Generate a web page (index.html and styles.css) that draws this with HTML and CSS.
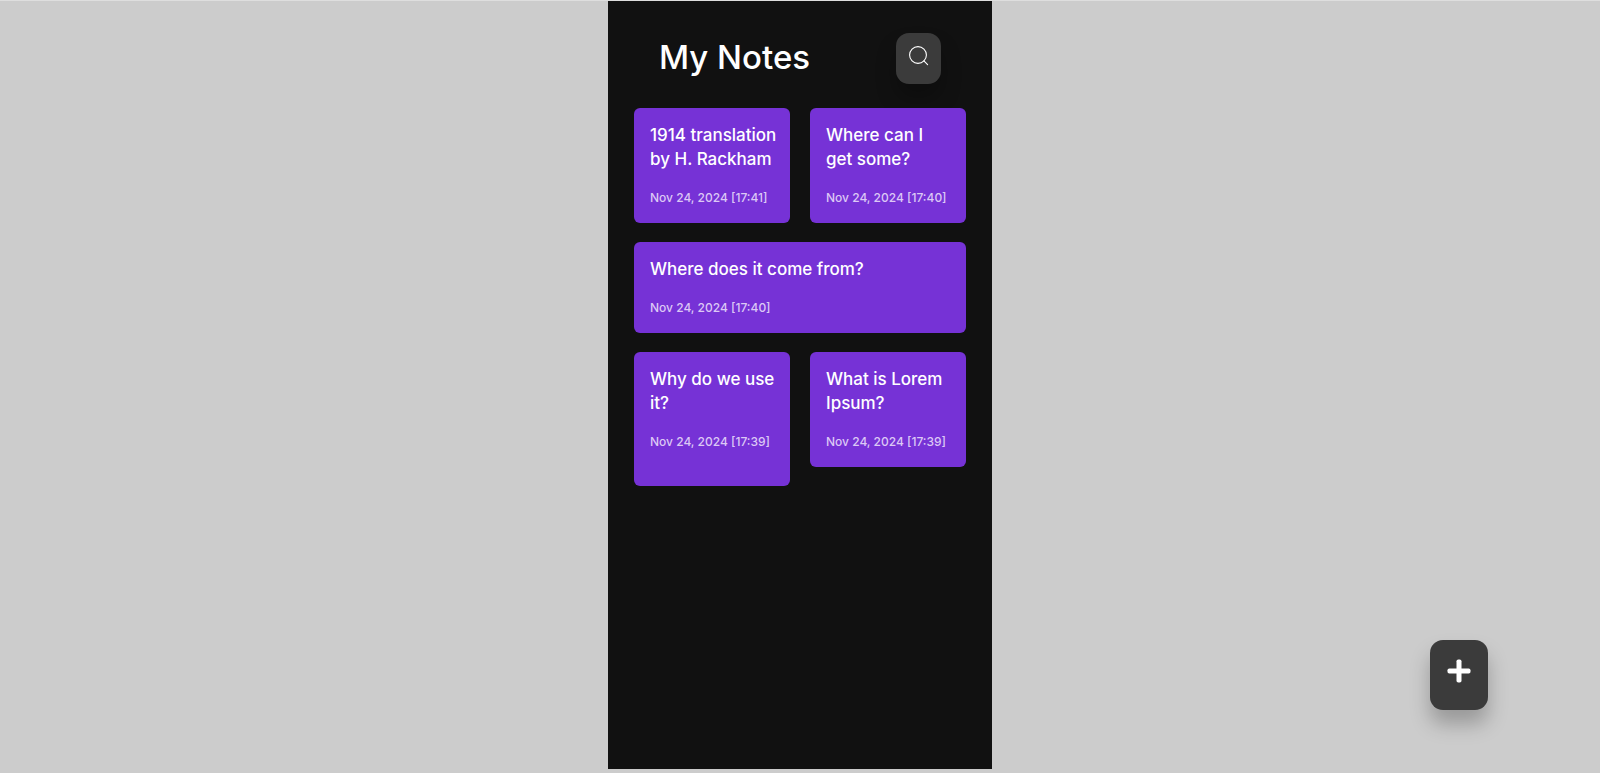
FILE: index.html
```html
<!DOCTYPE html>
<html lang="en">
<head>
<meta charset="utf-8">
<meta name="viewport" content="width=device-width, initial-scale=1">
<title>My Notes</title>
<link rel="stylesheet" href="styles.css">
</head>
<body>
<main class="panel">
  <header class="header">
    <h1 class="title">My Notes</h1>
    <button class="icon-button search" type="button" aria-label="Search">
      <svg width="21" height="21" viewBox="0 0 21 21" fill="none" stroke="currentColor" stroke-width="1.1" stroke-linecap="round" aria-hidden="true">
        <circle cx="10" cy="10" r="8.4"/>
        <path d="M15.9 15.9 L19.6 19.6"/>
      </svg>
    </button>
  </header>
  <section class="notes">
    <article class="note">
      <h2 class="note-title">1914 translation by H. Rackham</h2>
      <time class="note-date" datetime="2024-11-24T17:41">Nov 24, 2024 [17:41]</time>
    </article>
    <article class="note">
      <h2 class="note-title">Where can I<br>get some?</h2>
      <time class="note-date" datetime="2024-11-24T17:40">Nov 24, 2024 [17:40]</time>
    </article>
    <article class="note note-wide">
      <h2 class="note-title">Where does it come from?</h2>
      <time class="note-date" datetime="2024-11-24T17:40">Nov 24, 2024 [17:40]</time>
    </article>
    <article class="note note-tall">
      <h2 class="note-title">Why do we use it?</h2>
      <time class="note-date" datetime="2024-11-24T17:39">Nov 24, 2024 [17:39]</time>
    </article>
    <article class="note">
      <h2 class="note-title">What is Lorem Ipsum?</h2>
      <time class="note-date" datetime="2024-11-24T17:39">Nov 24, 2024 [17:39]</time>
    </article>
  </section>
</main>
<button class="icon-button add" type="button" aria-label="Add note">
  <svg width="24" height="24" viewBox="0 0 24 24" fill="currentColor" aria-hidden="true">
    <rect x="9.5" y="0.5" width="5" height="23" rx="1.8"/>
    <rect x="0.5" y="9.5" width="23" height="5" rx="1.8"/>
  </svg>
</button>
</body>
</html>
```
FILE: styles.css
```css
* {
  box-sizing: border-box;
}

body {
  margin: 0;
  min-height: 100vh;
  padding-bottom: 4px;
  border-top: 1px solid #dedede;
  background: #ccc;
  color: #fff;
  font-family: Inter, "Open Sans", sans-serif;
  display: flex;
  justify-content: center;
}

.panel {
  width: 24%;
  min-width: 384px;
  padding: 32px 26px;
  background: #111;
}

.header {
  display: flex;
  justify-content: space-between;
  align-items: flex-start;
  padding: 0 25px;
  margin-bottom: 24px;
}

.title {
  margin: 0;
  font-size: 33px;
  line-height: 48px;
  font-weight: 500;
}

.icon-button {
  display: flex;
  justify-content: center;
  align-items: flex-start;
  border: 0;
  border-radius: 13px;
  background: #3b3b3b;
  color: #fff;
  box-shadow: 0 14px 20px rgba(0, 0, 0, 0.25);
  cursor: pointer;
}

.search {
  padding: 12px 12px 18px;
}

.notes {
  display: grid;
  grid-template-columns: 1fr 1fr;
  align-items: start;
  gap: 19px 20px;
}

.note {
  padding: 15px 12px 15px 16px;
  border-radius: 6px;
  background: #7632d6;
}

.note-wide {
  grid-column: 1 / -1;
}

.note-tall {
  padding-bottom: 34px;
}

.note-title {
  margin: 0 0 17px;
  font-size: 17px;
  line-height: 24px;
  font-weight: 500;
}

.note-date {
  display: block;
  font-size: 12px;
  line-height: 20px;
  font-weight: 500;
  white-space: nowrap;
  color: #dcc8f5;
}

.add {
  position: fixed;
  right: 7%;
  bottom: 63px;
  padding: 19px 17px 27px;
}
```
